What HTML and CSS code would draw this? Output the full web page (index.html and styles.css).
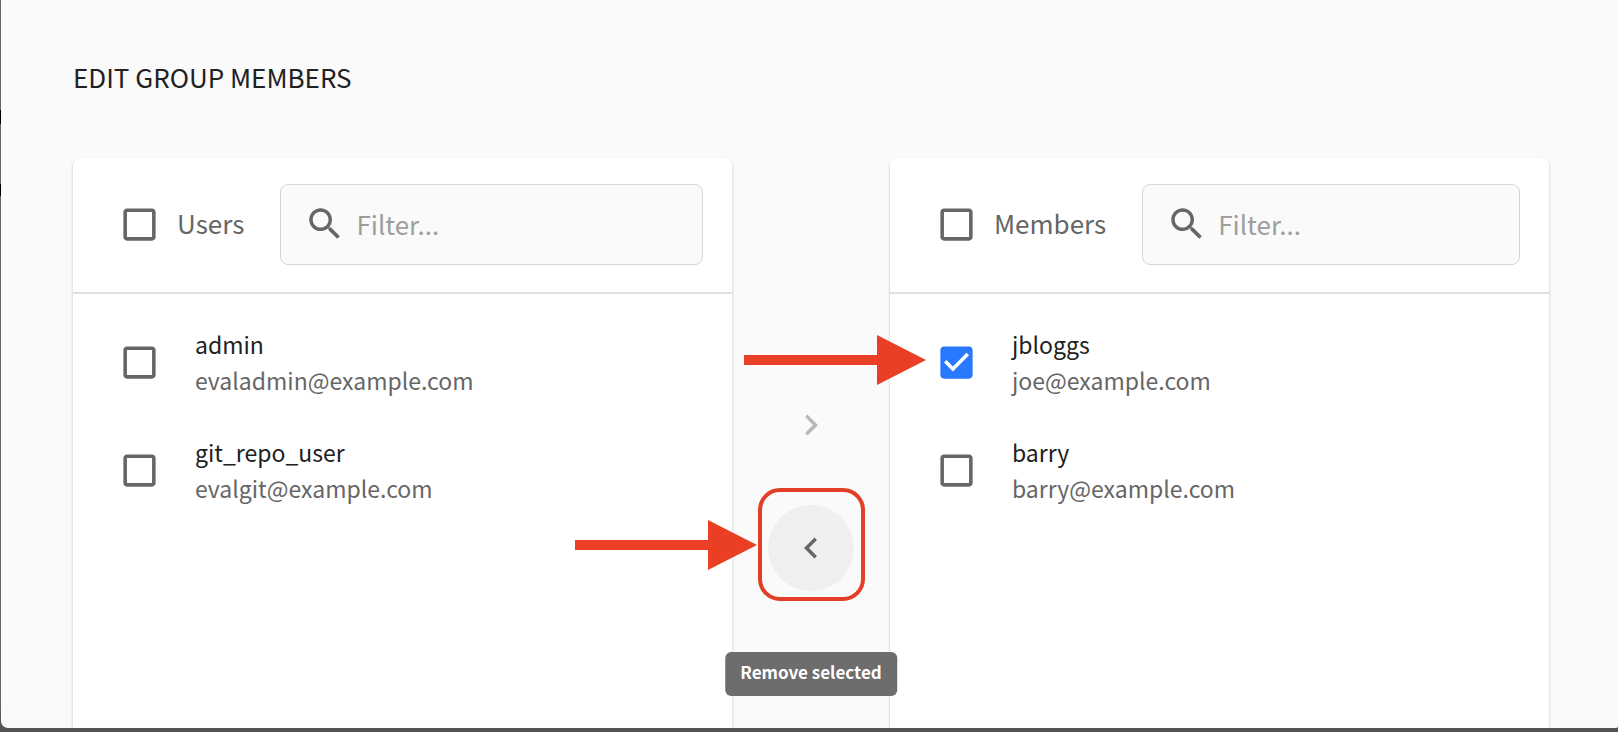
FILE: index.html
```html
<!DOCTYPE html>
<html lang="en">
<head>
<meta charset="utf-8">
<title>Edit group members</title>
<link rel="stylesheet" href="styles.css">
</head>
<body>
<main class="window">
  <h1 class="title">EDIT GROUP MEMBERS</h1>
  <div class="transfer">
    <section class="card">
      <header class="card-header">
        <input class="check" type="checkbox" id="all-users">
        <label class="card-label" for="all-users">Users</label>
        <div class="filter">
          <svg class="icon" viewBox="0 0 24 24" aria-hidden="true"><path d="M15.5 14h-.79l-.28-.27C15.41 12.59 16 11.11 16 9.500 16 5.910 13.090 3 9.500 3S3 5.910 3 9.500 5.910 16 9.500 16c1.610 0 3.090-.59 4.230-1.570l.27.28v.79l5 4.990L20.490 19l-4.990-5zm-6 0C7.010 14 5 11.990 5 9.500S7.010 5 9.500 5 14 7.010 14 9.500 11.990 14 9.500 14z"/></svg>
          <input class="filter-input" type="text" placeholder="Filter..." aria-label="Filter users">
        </div>
      </header>
      <ul class="list">
        <li class="row">
          <input class="check" type="checkbox" id="u-admin">
          <label class="person" for="u-admin"><span class="name">admin</span><span class="email">evaladmin@example.com</span></label>
        </li>
        <li class="row">
          <input class="check" type="checkbox" id="u-git">
          <label class="person" for="u-git"><span class="name">git_repo_user</span><span class="email">evalgit@example.com</span></label>
        </li>
      </ul>
    </section>

    <div class="moves">
      <button class="move" type="button" disabled aria-label="Add selected">
        <svg class="icon" viewBox="0 0 24 24" aria-hidden="true"><path d="M10 6 8.590 7.410 13.170 12l-4.580 4.590L10 18l6-6z"/></svg>
      </button>
      <div class="callout">
        <button class="move move-active" type="button" aria-label="Remove selected" aria-describedby="tip">
          <svg class="icon" viewBox="0 0 24 24" aria-hidden="true"><path d="M15.410 7.410 14 6l-6 6 6 6 1.410-1.410L10.830 12z"/></svg>
        </button>
        <span class="ring"></span>
        <svg class="arrow arrow-button" viewBox="0 0 182 50" aria-hidden="true"><path d="M0 20H133V0L182 25L133 50V30H0z"/></svg>
        <span class="tooltip" id="tip" role="tooltip">Remove selected</span>
      </div>
    </div>

    <section class="card">
      <header class="card-header">
        <input class="check" type="checkbox" id="all-members">
        <label class="card-label" for="all-members">Members</label>
        <div class="filter">
          <svg class="icon" viewBox="0 0 24 24" aria-hidden="true"><path d="M15.5 14h-.79l-.28-.27C15.41 12.59 16 11.11 16 9.500 16 5.910 13.090 3 9.500 3S3 5.910 3 9.500 5.910 16 9.500 16c1.610 0 3.090-.59 4.230-1.570l.27.28v.79l5 4.990L20.490 19l-4.990-5zm-6 0C7.010 14 5 11.990 5 9.500S7.010 5 9.500 5 14 7.010 14 9.500 11.990 14 9.500 14z"/></svg>
          <input class="filter-input" type="text" placeholder="Filter..." aria-label="Filter members">
        </div>
      </header>
      <ul class="list">
        <li class="row">
          <input class="check" type="checkbox" id="m-joe" checked>
          <label class="person" for="m-joe"><span class="name">jbloggs</span><span class="email">joe@example.com</span></label>
          <svg class="arrow arrow-row" viewBox="0 0 182 50" aria-hidden="true"><path d="M0 20H133V0L182 25L133 50V30H0z"/></svg>
        </li>
        <li class="row">
          <input class="check" type="checkbox" id="m-barry">
          <label class="person" for="m-barry"><span class="name">barry</span><span class="email">barry@example.com</span></label>
        </li>
      </ul>
    </section>
  </div>
</main>
</body>
</html>
```
FILE: styles.css
```css
* {
  box-sizing: border-box;
}

body {
  margin: 0;
  height: 100vh;
  padding: 0 0 4px 1px;
  overflow: hidden;
  background: linear-gradient(#666 110px, #000 110px 124px, #666 124px 184px, #000 184px 196px, #666 196px 700px, #545354 728px);
  color: #212121;
  font-family: "Noto Sans CJK SC", "Noto Sans", sans-serif;
  font-size: 23px;
}

.window {
  height: 100%;
  display: flex;
  flex-direction: column;
  padding: 58px 69px 0 72px;
  overflow: hidden;
  background: #fafafa;
  border-radius: 0 0 2px 7px;
}

.title {
  margin: 0 0 62px;
  font-size: 26px;
  font-weight: 400;
  line-height: 38px;
}

.transfer {
  flex: 1;
  display: grid;
  grid-template-columns: minmax(0, 1fr) 158px minmax(0, 1fr);
}

.card {
  background: #fff;
  border-radius: 7px 7px 0 0;
  box-shadow: 0 2px 3px rgba(0, 0, 0, 0.24);
}

.card-header {
  display: flex;
  align-items: center;
  padding: 26px 29px 27px 45px;
  border-bottom: 2px solid #e0e0e0;
}

.card-label {
  margin: 0 36px 0 16px;
  padding-bottom: 4px;
  color: #666;
  font-size: 26px;
  line-height: 38px;
}

.check {
  appearance: none;
  flex: none;
  width: 43px;
  height: 43px;
  margin: 0;
  background: url("data:image/svg+xml,%3Csvg xmlns='http://www.w3.org/2000/svg' viewBox='0 0 24 24'%3E%3Cpath fill='%23666' d='M19 5v14H5V5h14m0-2H5c-1.100 0-2 .9-2 2v14c0 1.100.9 2 2 2h14c1.100 0 2-.9 2-2V5c0-1.100-.9-2-2-2z'/%3E%3C/svg%3E") center / contain no-repeat;
}

.check:checked {
  background-image: url("data:image/svg+xml,%3Csvg xmlns='http://www.w3.org/2000/svg' viewBox='0 0 24 24'%3E%3Cpath fill='%232979ff' d='M19 3H5c-1.110 0-2 .9-2 2v14c0 1.100.89 2 2 2h14c1.110 0 2-.9 2-2V5c0-1.100-.89-2-2-2zm-9 14l-5-5 1.410-1.410L10 14.170l7.590-7.590L19 8l-9 9z'/%3E%3C/svg%3E");
}

.filter {
  flex: 1;
  min-width: 0;
  height: 81px;
  display: flex;
  align-items: center;
  gap: 10px;
  padding: 0 24px 2px 23px;
  background: #fafafa;
  border: 1px solid #d6d6d6;
  border-radius: 8px;
}

.filter-input {
  flex: 1;
  min-width: 0;
  padding: 0;
  border: 0;
  outline: 0;
  background: none;
  color: #212121;
  font-family: inherit;
  font-size: 26px;
  line-height: 38px;
}

.filter-input::placeholder {
  color: #9e9e9e;
}

.icon {
  flex: none;
  width: 42px;
  height: 42px;
  fill: #666;
}

.list {
  margin: 0;
  padding: 14px 0 0;
  list-style: none;
}

.row {
  position: relative;
  display: flex;
  align-items: center;
  gap: 34px;
  padding: 18px 29px 18px 45px;
}

.person {
  display: flex;
  flex-direction: column;
  line-height: 36px;
}

.email {
  color: #666;
}

.moves {
  display: flex;
  flex-direction: column;
  align-items: center;
  gap: 37px;
  padding-top: 224px;
}

.move {
  display: grid;
  place-items: center;
  width: 86px;
  height: 86px;
  padding: 0;
  border: 0;
  border-radius: 50%;
  background: none;
}

.move:disabled .icon {
  fill: #b8b8b8;
}

.move-active {
  background: #efefef;
}

.callout {
  position: relative;
}

.ring {
  position: absolute;
  inset: -17px -11px -10px -10px;
  border: 4px solid #e23f26;
  border-radius: 22px;
}

.arrow {
  position: absolute;
  width: 182px;
  height: 50px;
  fill: #ea3f25;
}

.arrow-button {
  right: 97px;
  top: 15px;
}

.arrow-row {
  right: calc(100% - 36px);
  top: 27px;
}

.tooltip {
  position: absolute;
  top: 147px;
  left: 50%;
  transform: translateX(-50%);
  padding: 6px 15px 10px;
  border-radius: 6px;
  background: #6d6d6d;
  color: #fff;
  font-size: 17px;
  font-weight: 700;
  line-height: 28px;
  white-space: nowrap;
}
```
